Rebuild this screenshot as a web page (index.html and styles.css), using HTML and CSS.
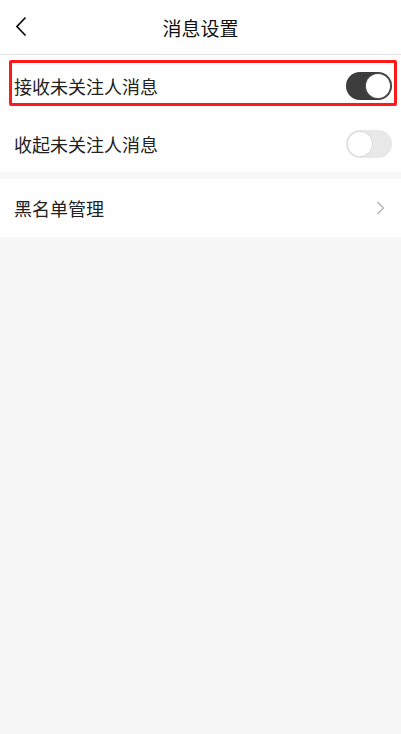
FILE: index.html
```html
<!DOCTYPE html>
<html lang="zh-CN">
<head>
    <meta charset="UTF-8">
    <meta name="viewport" content="width=device-width, initial-scale=1.0">
    <title>消息设置</title>
    <link rel="stylesheet" href="styles.css">
</head>
<body>
    <div class="header">
        <span class="back">
            <svg width="12" height="21" viewBox="0 0 12 21"><path d="M10.5 1.5 L2 10.5 L10.5 19.5" fill="none" stroke="#111" stroke-width="1.8"/></svg>
        </span>
        <div class="title">消息设置</div>
    </div>

    <div class="group">
        <div class="row row-first">
            <span class="label">接收未关注人消息</span>
            <span class="switch on"><span class="knob"></span></span>
            <div class="highlight"></div>
        </div>
        <div class="row row-second">
            <span class="label">收起未关注人消息</span>
            <span class="switch"><span class="knob"></span></span>
        </div>
    </div>

    <div class="group">
        <div class="row row-third">
            <span class="label">黑名单管理</span>
            <svg class="arrow" width="9" height="14" viewBox="0 0 9 14"><path d="M1.5 1 L7.5 7 L1.5 13" fill="none" stroke="#b0b0b0" stroke-width="1.3"/></svg>
        </div>
    </div>
</body>
</html>
```

FILE: styles.css
```css
html, body {
    margin: 0;
    padding: 0;
}
body {
    font-family: "Noto Sans CJK SC", "Noto Sans", sans-serif;
    background-color: #f7f7f7;
    color: #222;
    min-height: 734px;
}
.header {
    height: 54px;
    background-color: #fff;
    border-bottom: 1px solid #e2e2e2;
    display: flex;
    align-items: center;
    justify-content: center;
    position: relative;
}
.back {
    position: absolute;
    left: 15px;
    top: 16px;
    display: flex;
}
.title {
    font-size: 19px;
    color: #111;
}
.group {
    background-color: #fff;
    margin-bottom: 7px;
}
.row {
    display: flex;
    align-items: center;
    justify-content: space-between;
    padding: 0 9px 0 14px;
    position: relative;
}
.row-first {
    height: 61px;
}
.row-second {
    height: 56px;
}
.row-third {
    height: 58px;
    padding-right: 16px;
}
.label {
    font-size: 18px;
    color: #222;
}
.switch {
    width: 46px;
    height: 28px;
    border-radius: 14px;
    background-color: #e8e8e8;
    display: flex;
    align-items: center;
    padding: 0 2px;
    box-sizing: border-box;
}
.knob {
    width: 24px;
    height: 24px;
    border-radius: 50%;
    background-color: #fff;
    box-shadow: 0 0 0 1px #dcdcdc;
}
.switch.on {
    background-color: #3c3c3c;
    justify-content: flex-end;
}
.switch.on .knob {
    box-shadow: 0 0 0 1px #555;
}
.highlight {
    position: absolute;
    left: 9px;
    right: 4px;
    top: 5px;
    height: 46px;
    border: 3px solid #ff1a1a;
    border-radius: 2px;
    box-sizing: border-box;
}
```
